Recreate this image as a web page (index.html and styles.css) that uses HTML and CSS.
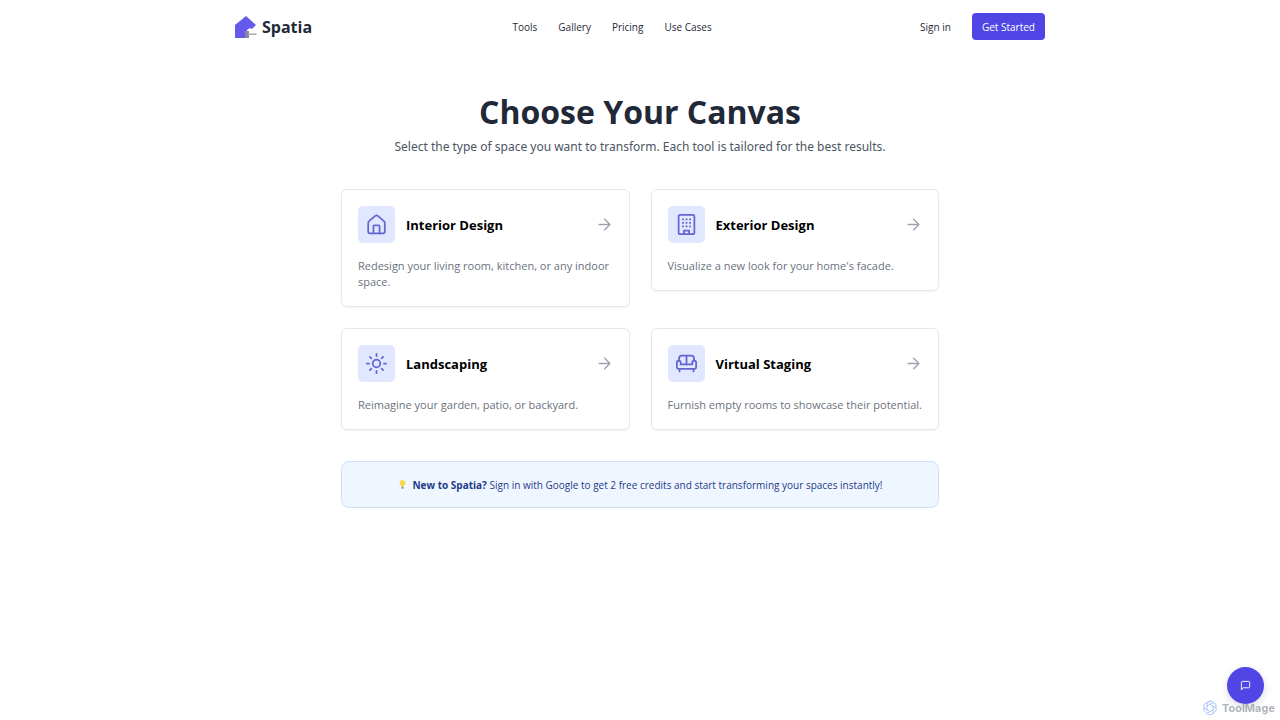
FILE: index.html
```html
<!DOCTYPE html>
<html lang="en">
<head>
    <meta charset="UTF-8">
    <meta name="viewport" content="width=device-width, initial-scale=1.0">
    <title>Spatia</title>
    <link rel="stylesheet" href="styles.css">
</head>
<body>
    <header class="header">
        <a class="logo" href="#">
            <svg class="logo-icon" viewBox="0 0 22 22" aria-hidden="true">
                <path d="M0 9 11 0l10 9-4 4-2-1-3 2-1 8H0z" fill="#6459ea"/>
                <path d="M10 15h4v7h-4z" fill="#8b8799"/>
                <path d="M13 17.500h8.500v1.500H13z" fill="#aaa8ae"/>
            </svg>
            <span>Spatia</span>
        </a>
        <nav class="nav">
            <a href="#">Tools</a>
            <a href="#">Gallery</a>
            <a href="#">Pricing</a>
            <a href="#">Use Cases</a>
        </nav>
        <div class="account">
            <a href="#">Sign in</a>
            <button class="start-btn" type="button">Get Started</button>
        </div>
    </header>

    <main class="main">
        <h1>Choose Your Canvas</h1>
        <p class="subtitle">Select the type of space you want to transform. Each tool is tailored for the best results.</p>

        <div class="cards">
            <a class="card" href="#">
                <div class="card-head">
                    <span class="card-icon">
                        <svg viewBox="0 0 24 24" aria-hidden="true">
                            <path d="M2.500 10.500c0-1.200.4-2 1.300-2.700l6.700-5.600a2.400 2.400 0 0 1 3 0l6.700 5.600c.9.700 1.300 1.500 1.300 2.700V20a2 2 0 0 1-2 2h-15a2 2 0 0 1-2-2z"/>
                            <path d="M8.500 22v-8a1 1 0 0 1 1-1h5a1 1 0 0 1 1 1v8"/>
                        </svg>
                    </span>
                    <h2>Interior Design</h2>
                    <svg class="arrow" viewBox="0 0 12 12" aria-hidden="true"><path d="M1 6h10M6 1l5 5-5 5"/></svg>
                </div>
                <p>Redesign your living room, kitchen, or any indoor space.</p>
            </a>
            <a class="card" href="#">
                <div class="card-head">
                    <span class="card-icon">
                        <svg viewBox="0 0 24 24" aria-hidden="true">
                            <rect x="3" y="1" width="18" height="22" rx="2"/>
                            <path d="M9 23v-4h6v4"/>
                            <path class="windows" d="M7 6h2m2 0h2m2 0h2M7 10h2m2 0h2m2 0h2M7 14h2m2 0h2m2 0h2"/>
                        </svg>
                    </span>
                    <h2>Exterior Design</h2>
                    <svg class="arrow" viewBox="0 0 12 12" aria-hidden="true"><path d="M1 6h10M6 1l5 5-5 5"/></svg>
                </div>
                <p>Visualize a new look for your home's facade.</p>
            </a>
            <a class="card" href="#">
                <div class="card-head">
                    <span class="card-icon">
                        <svg viewBox="0 0 24 24" aria-hidden="true">
                            <circle cx="12" cy="12" r="4.300"/>
                            <path d="M12 1v2.500M12 20.500V23M1 12h2.500M20.500 12H23M4.500 4.500l1.600 1.600M17.900 17.900l1.600 1.600M4.500 19.500l1.600-1.600M17.900 6.100l1.600-1.600"/>
                        </svg>
                    </span>
                    <h2>Landscaping</h2>
                    <svg class="arrow" viewBox="0 0 12 12" aria-hidden="true"><path d="M1 6h10M6 1l5 5-5 5"/></svg>
                </div>
                <p>Reimagine your garden, patio, or backyard.</p>
            </a>
            <a class="card" href="#">
                <div class="card-head">
                    <span class="card-icon">
                        <svg viewBox="0 0 24 24" aria-hidden="true">
                            <path d="M3.500 9V6a3 3 0 0 1 3-3h11a3 3 0 0 1 3 3v3M12 3v10"/>
                            <path d="M1 11a2.200 2.200 0 0 1 4.400 0v2h13.200v-2a2.200 2.200 0 0 1 4.400 0v5a2 2 0 0 1-2 2H3a2 2 0 0 1-2-2zM4 18v3M20 18v3"/>
                        </svg>
                    </span>
                    <h2>Virtual Staging</h2>
                    <svg class="arrow" viewBox="0 0 12 12" aria-hidden="true"><path d="M1 6h10M6 1l5 5-5 5"/></svg>
                </div>
                <p>Furnish empty rooms to showcase their potential.</p>
            </a>
        </div>

        <div class="notice">
            <svg class="bulb" viewBox="0 0 12 12" aria-hidden="true">
                <path d="M6 1a3.300 3.300 0 0 0-2 5.900c.5.500.7 1 .8 1.600h2.400c.1-.6.300-1.100.8-1.600A3.300 3.300 0 0 0 6 1z" fill="#f9d64a"/>
                <path d="M4.800 8.500h2.400v1.700L6 11l-1.200-.8z" fill="#8c969d"/>
            </svg>
            <p><strong>New to Spatia?</strong> Sign in with Google to get 2 free credits and start transforming your spaces instantly!</p>
        </div>
    </main>

    <button class="chat-btn" type="button" aria-label="Chat">
        <svg viewBox="0 0 12 12" aria-hidden="true"><path d="M1.500 10.500V2.500a1 1 0 0 1 1-1h7a1 1 0 0 1 1 1v5a1 1 0 0 1-1 1h-6z"/></svg>
    </button>
    <div class="watermark">
        <svg viewBox="0 0 16 16" aria-hidden="true">
            <path d="M8 1l3 1.500 3 2v6l-3 3L8 15l-3-1.500-3-3v-6l3-2zM8 4.500l3 1.700v3.600l-3 1.700-3-1.700V6.200zM5 6.200V3l3-2M8 4.500l3-2M11 6.200l3 1.500M11 9.800v3.700M8 11.500L5 13.500M5 9.800L2 8"/>
        </svg>
        <span>ToolMage</span>
    </div>
</body>
</html>
```
FILE: styles.css
```css
* {
    box-sizing: border-box;
}
body {
    font-family: "Open Sans", "Noto Sans", sans-serif;
    font-size: 10px;
    margin: 0;
    color: #1f2937;
    background-color: #fff;
}
h1, h2, p {
    margin: 0;
}
a {
    color: inherit;
    text-decoration: none;
}
button {
    font-family: inherit;
    border: none;
    cursor: pointer;
    color: #fff;
    background-color: #4f46e5;
}
svg {
    flex: none;
    fill: none;
    stroke-linecap: round;
    stroke-linejoin: round;
}
.header {
    display: flex;
    justify-content: space-between;
    align-items: center;
    max-width: 832px;
    height: 53px;
    margin: 0 auto;
    padding: 0 11px;
}
.logo {
    display: flex;
    align-items: center;
    gap: 5px;
    font-size: 16px;
    font-weight: 700;
}
.logo-icon {
    width: 22px;
    height: 22px;
}
.nav {
    display: flex;
    gap: 21px;
}
.account {
    display: flex;
    align-items: center;
    gap: 21px;
    padding-left: 8px;
}
.start-btn {
    height: 27px;
    padding: 0 10px;
    font-size: 10px;
    border-radius: 4px;
}
.main {
    max-width: 640px;
    margin: 0 auto;
    padding: 37px 21px;
}
h1 {
    font-size: 32px;
    line-height: 43px;
    text-align: center;
}
.subtitle {
    font-family: "Noto Sans", "Open Sans", sans-serif;
    font-size: 12px;
    line-height: 20px;
    margin-top: 4px;
    text-align: center;
    color: #4b5563;
}
.cards {
    display: grid;
    grid-template-columns: repeat(auto-fit, minmax(260px, 1fr));
    align-items: start;
    gap: 21px;
    margin-top: 32px;
}
.card {
    padding: 16px;
    border: 1px solid #e5e7eb;
    border-radius: 6px;
    box-shadow: 0 1px 2px rgba(0, 0, 0, 0.05);
}
.card-head {
    display: flex;
    align-items: center;
    gap: 11px;
}
.card-icon {
    display: flex;
    align-items: center;
    justify-content: center;
    width: 37px;
    height: 37px;
    border-radius: 5px;
    background-color: #e0e7ff;
}
.card-icon svg {
    width: 21px;
    height: 21px;
    stroke: #6366d1;
    stroke-width: 2;
}
.card-icon .windows {
    stroke-linecap: butt;
}
.card h2 {
    flex: 1;
    font-size: 13px;
    line-height: 18px;
    color: #000;
}
.arrow {
    width: 13px;
    height: 13px;
    margin-right: 2px;
    stroke: #9ca3af;
    stroke-width: 1.2;
}
.card p {
    margin-top: 15px;
    font-size: 11px;
    line-height: 16px;
    color: #6b7280;
}
.notice {
    display: flex;
    align-items: center;
    justify-content: center;
    gap: 4px;
    min-height: 47px;
    margin-top: 31px;
    padding: 8px 16px;
    border: 1px solid #cfe2f3;
    border-radius: 8px;
    color: #1e3a8a;
    background-color: #eff6ff;
}
.bulb {
    width: 11px;
    height: 11px;
}
.chat-btn {
    position: fixed;
    right: 16px;
    bottom: 16px;
    display: flex;
    align-items: center;
    justify-content: center;
    width: 37px;
    height: 37px;
    padding: 0;
    border-radius: 50%;
    box-shadow: 0 3px 8px rgba(0, 0, 0, 0.15);
}
.chat-btn svg {
    width: 11px;
    height: 11px;
    stroke: #fff;
}
.watermark {
    position: fixed;
    right: 5px;
    bottom: 4px;
    display: flex;
    align-items: center;
    gap: 4px;
    font-family: Inter, sans-serif;
    font-size: 11px;
    font-weight: 700;
    line-height: 16px;
    color: #9ca0a8;
    opacity: 0.8;
}
.watermark svg {
    width: 16px;
    height: 16px;
    stroke: #8fb8f5;
}
```
